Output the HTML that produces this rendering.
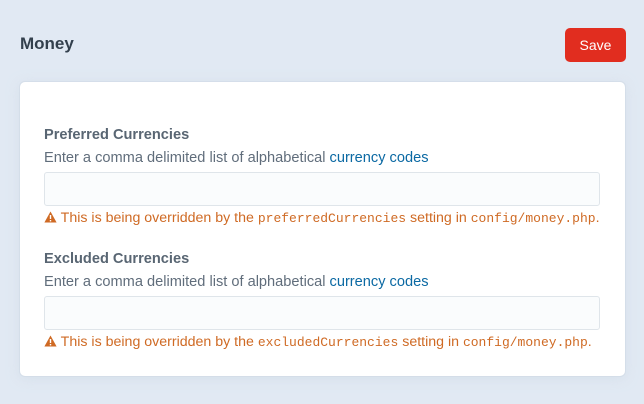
<!DOCTYPE html>
<html><head><meta charset="utf-8"><style>
body{margin:0;width:644px;height:404px;background:#e1e9f3;font-family:"Liberation Sans",sans-serif;position:relative;overflow:hidden}
h1{position:absolute;left:20px;top:34px;margin:0;font-size:17px;font-weight:bold;color:#33404d}
.save{position:absolute;left:565px;top:28px;width:61px;height:34px;background:#e12d1f;border-radius:5px;color:#fff;font-size:14px;line-height:34px;text-align:center}
.card{position:absolute;left:20px;top:82px;width:605px;height:294px;background:#fff;border-radius:5px;box-shadow:0 0 0 1px rgba(205,216,228,.5),0 2px 12px rgba(205,216,228,.6)}
.f{position:absolute;left:24px;width:560px}
.lab{font-size:14.6px;font-weight:bold;color:#596673;height:20px}
.ins{font-size:14.6px;color:#606d7b;margin-top:3px;height:20px}
.ins a{color:#0b69a3;text-decoration:none}
.inp{margin-top:2px;width:554px;height:32px;border:1px solid #dfe5ea;border-radius:3px;background:#fafcfd}
.w{margin-top:4px;font-size:14.2px;color:#cf6a24;white-space:nowrap}
.w code{font-family:"Liberation Mono",monospace;font-size:13px}
</style></head><body>
<h1>Money</h1>
<div class="save">Save</div>
<div class="card">
<div class="f" style="top:45px">
<div class="lab">Preferred Currencies</div>
<div class="ins">Enter a comma delimited list of alphabetical <a>currency codes</a></div>
<div class="inp"></div>
<div class="w"><svg width="13" height="12" viewBox="0 0 13 12" style="vertical-align:-1px"><path d="M6.5 0.5L12.6 11.5H0.4Z" fill="#cf6a24"/><rect x="5.8" y="4" width="1.4" height="4" fill="#fff"/><rect x="5.8" y="9" width="1.4" height="1.4" fill="#fff"/></svg> This is being overridden by the <code>preferredCurrencies</code> setting in <code>config/money.php</code>.</div>
</div>
<div class="f" style="top:169px">
<div class="lab">Excluded Currencies</div>
<div class="ins">Enter a comma delimited list of alphabetical <a>currency codes</a></div>
<div class="inp"></div>
<div class="w"><svg width="13" height="12" viewBox="0 0 13 12" style="vertical-align:-1px"><path d="M6.5 0.5L12.6 11.5H0.4Z" fill="#cf6a24"/><rect x="5.8" y="4" width="1.4" height="4" fill="#fff"/><rect x="5.8" y="9" width="1.4" height="1.4" fill="#fff"/></svg> This is being overridden by the <code>excludedCurrencies</code> setting in <code>config/money.php</code>.</div>
</div>
</div>
</body></html>
